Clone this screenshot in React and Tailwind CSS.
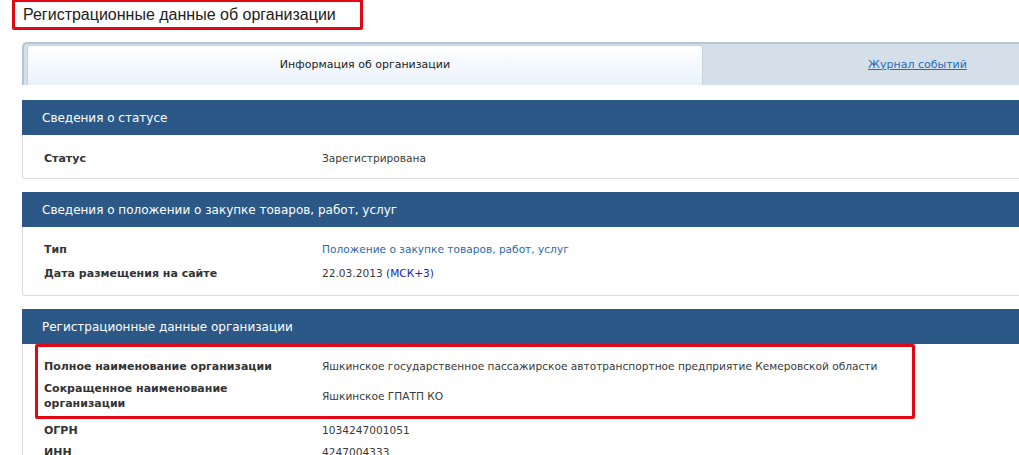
import React from "react";

const font = { fontFamily: "Tahoma, 'DejaVu Sans', sans-serif" };

const Row = ({ label, children, twoLine, h = "min-h-[24px]" }) => (
  <div className={`flex items-center ${twoLine ? "min-h-[36px]" : h}`}>
    <div className="w-[278px] shrink-0 font-bold text-[11px] leading-[15px] text-[#333]">{label}</div>
    <div className="text-[10.6px] leading-[15px] text-[#3a3a3a]">{children}</div>
  </div>
);

const Section = ({ title, children, bodyClass = "px-[21px] py-[10px]" }) => (
  <div className="mb-[13px]">
    <div className="bg-[#2b5886] h-[35px] flex items-center pl-[20px] text-white text-[12px]">{title}</div>
    <div className={`border border-t-0 border-[#dcdcdc] rounded-b-[3px] ${bodyClass}`}>{children}</div>
  </div>
);

export default function App() {
  return (
    <div className="w-[1019px] h-[455px] overflow-hidden bg-white" style={font}>
      <div className="pl-[12px]">
        <div className="inline-block border-[3px] border-[#e30613] rounded-[2px] h-[31px] -mt-[1px] pl-[8px] pr-[24px] leading-[25px] text-[16px] text-[#222]" style={{ fontFamily: "'Liberation Sans', sans-serif" }}>
          Регистрационные данные об организации
        </div>
      </div>

      <div className="ml-[22px] w-[1110px] mt-[12px]">
        {/* вкладки */}
        <div className="flex h-[43px] bg-[#d5dfe9] border-t-2 border-l-2 border-[#b7c4d2] rounded-tl-[5px] pt-[1px] pl-[3px]">
          <div className="w-[676px] rounded-t-[3px] border border-b-0 border-[#c6d3df] bg-gradient-to-b from-white to-[#e9f2fb] flex items-center justify-center text-[11px] text-[#222]">
            Информация об организации
          </div>
          <div className="flex-1 flex items-center justify-center">
            <a href="#" className="text-[11px] text-[#2a6cb5] underline">Журнал событий</a>
          </div>
        </div>

        <div className="mt-[15px]">
          <Section title="Сведения о статусе" bodyClass="px-[21px] pt-[11px] pb-[8px]">
            <Row label="Статус">Зарегистрирована</Row>
          </Section>

          <Section title="Сведения о положении о закупке товаров, работ, услуг">
            <Row label="Тип">
              <span className="text-[#2e6aaa]">Положение о закупке товаров, работ, услуг</span>
            </Row>
            <Row label="Дата размещения на сайте">
              22.03.2013 <span className="text-[#2323b0]">(МСК+3)</span>
            </Row>
          </Section>

          <Section title="Регистрационные данные организации" bodyClass="px-[21px] pt-0 pb-[10px]">
            <div className="-ml-[9px] w-[880px] border-[3px] border-[#e30613] rounded-[2px] pl-[6px] pt-[7px] pb-[2px]">
              <Row label="Полное наименование организации">
                Яшкинское государственное пассажирское автотранспортное предприятие Кемеровской области
              </Row>
              <Row label={<span>Сокращенное наименование<br />организации</span>} twoLine>
                Яшкинское ГПАТП КО
              </Row>
            </div>
            <Row label="ОГРН" h="min-h-[22px]">1034247001051</Row>
            <Row label="ИНН" h="min-h-[22px]">4247004333</Row>
          </Section>
        </div>
      </div>
    </div>
  );
}
